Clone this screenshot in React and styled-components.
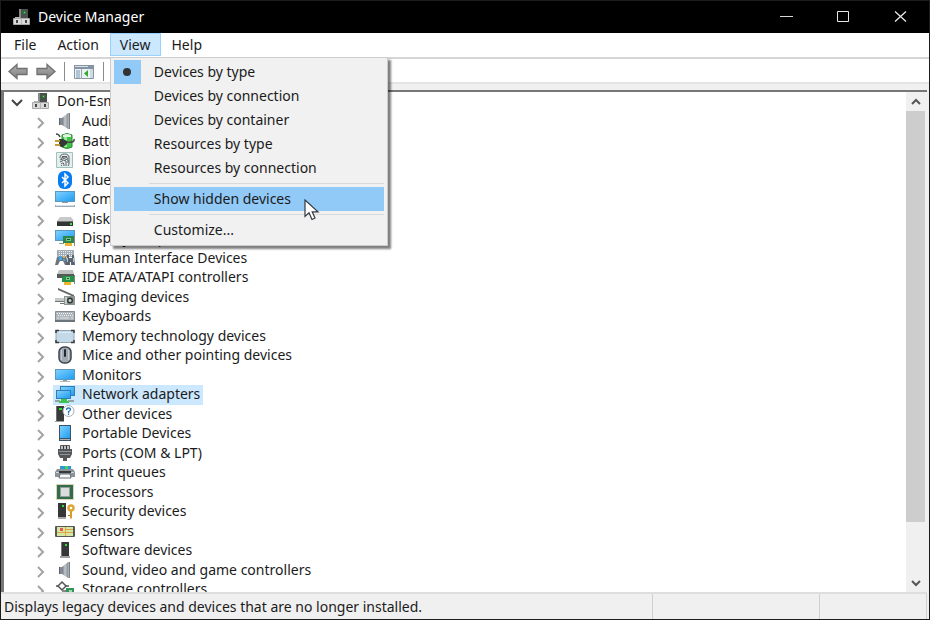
import React from "react";
import styled, { createGlobalStyle, css } from "styled-components";

const colors = {
  frame: "#1c1c1c",
  panel: "#f0f0f0",
  menu: "#f1f1f1",
  line: "#d6d6d6",
  highlight: "#91c9f7",
  hover: "#cce8ff",
  text: "#1b1b1b",
};

const GlobalStyle = createGlobalStyle`
  * {
    box-sizing: border-box;
  }
  body {
    margin: 0;
    font-family: "Noto Sans", "Open Sans", sans-serif;
    font-size: 14px;
    line-height: 18px;
    color: ${colors.text};
  }
  button {
    border: 0;
    padding: 0;
    background: none;
    font: inherit;
    color: inherit;
  }
  ul {
    list-style: none;
    margin: 0;
    padding: 0;
  }
  svg {
    display: block;
    flex: none;
  }
`;

const Window = styled.div`
  display: flex;
  flex-direction: column;
  height: 100vh;
  border: 1px solid ${colors.frame};
  background-color: ${colors.panel};
  overflow: hidden;
`;

const TitleBar = styled.header`
  display: flex;
  align-items: center;
  height: 32px;
  padding-left: 11px;
  background-color: #000;
  color: #fff;

  h1 {
    flex: 1;
    margin: 0 0 0 6px;
    font-size: 14px;
    font-weight: 400;
  }
`;

const WindowButton = styled.button`
  display: flex;
  align-items: center;
  justify-content: center;
  width: 57px;
  height: 32px;
`;

const MenuBar = styled.nav`
  display: flex;
  gap: 1px;
  height: 26px;
  padding-left: 3px;
  background-color: #fff;
  border-bottom: 2px solid ${colors.line};
`;

const MenuItem = styled.div`
  position: relative;
`;

const MenuButton = styled.button`
  height: 23px;
  padding: 0 9px;
  border: 1px solid transparent;
  line-height: 21px;

  ${(props) =>
    props.$open &&
    css`
      background-color: ${colors.hover};
      border-color: #99d1ff;
    `}
`;

const Dropdown = styled.div`
  position: absolute;
  top: 24px;
  left: 0;
  z-index: 2;
  width: 278px;
  padding: 2px 3px 3px;
  background-color: ${colors.menu};
  border: 1px solid #ccc;
  box-shadow: 3px 3px 2px rgba(0, 0, 0, 0.5);

  hr {
    height: 1px;
    margin: 3px 0 3px 35px;
    border: 0;
    background-color: #d9d9d9;
  }
`;

const DropdownItem = styled.button`
  position: relative;
  display: flex;
  align-items: center;
  width: 100%;
  height: 24px;
  text-align: left;
  background-color: ${(props) => (props.$active ? colors.highlight : "transparent")};
`;

const CheckCell = styled.span`
  display: flex;
  align-items: center;
  justify-content: center;
  width: 27px;
  height: 24px;
  margin-right: 13px;
  background-color: ${(props) => (props.$checked ? colors.highlight : "transparent")};

  &::before {
    content: "";
    width: 8px;
    height: 8px;
    border-radius: 50%;
    background-color: ${(props) => (props.$checked ? "#333" : "transparent")};
  }
`;

const Pointer = styled.svg`
  position: absolute;
  left: 190px;
  top: 12px;
  z-index: 3;
`;

const ToolBar = styled.div`
  display: flex;
  align-items: center;
  gap: 8px;
  height: 25px;
  padding: 2px 0 0 7px;
  background-color: #fff;
  border-bottom: 2px solid #e4e4e4;
`;

const Separator = styled.span`
  width: 1px;
  height: 19px;
  background-color: #8c8c8c;
`;

const Content = styled.main`
  flex: 1;
  min-height: 0;
  display: flex;
  margin: 6px 2px 0 0;
  border: solid #777;
  border-width: 2px 0 0 3px;
  background-color: #fff;
`;

const Tree = styled.ul`
  flex: 1;
  overflow: hidden;
`;

const Branch = styled.ul`
  padding-left: 30px;
`;

const Row = styled.div`
  display: flex;
  align-items: center;
  height: ${(props) => props.$height}px;
`;

const Expander = styled.button`
  display: flex;
  align-items: center;
  justify-content: center;
  width: ${(props) => (props.$root ? 25 : 14)}px;
  height: 18px;
  margin-right: ${(props) => (props.$root ? 0 : 5)}px;
  padding-top: 2px;
`;

const Label = styled.span`
  display: flex;
  align-items: center;
  gap: ${(props) => (props.$root ? 6 : 7)}px;
  height: 100%;
  padding: 0 3px 2px 2px;
  white-space: nowrap;
  background-color: ${(props) => (props.$selected ? "#cce8ff" : "transparent")};
`;

const ScrollBar = styled.div`
  display: flex;
  flex-direction: column;
  width: 21px;
  padding-right: 2px;
  background-color: ${colors.panel};
`;

const ScrollButton = styled.button`
  display: flex;
  align-items: center;
  justify-content: center;
  height: 19px;
`;

const ScrollTrack = styled.div`
  flex: 1;

  div {
    height: 89%;
    background-color: #cdcdcd;
  }
`;

const StatusBar = styled.footer`
  display: grid;
  grid-template-columns: 1fr 167px 107px;
  height: 27px;
  margin-right: 2px;
  border-top: 2px solid #dedede;
  line-height: 26px;

  span {
    padding-left: 3px;
    border-right: 1px solid #d0d0d0;
  }
`;

const Gradients = () => (
  <defs>
    <linearGradient id="screen" x1="0" y1="0" x2="1" y2="1">
      <stop offset="0" stopColor="#7fd0ff" />
      <stop offset="1" stopColor="#1f9df2" />
    </linearGradient>
    <linearGradient id="cone" x1="0" y1="0" x2="1" y2="0">
      <stop offset="0" stopColor="#70787f" />
      <stop offset="0.5" stopColor="#c3c8cc" />
      <stop offset="1" stopColor="#8a9198" />
    </linearGradient>
    <linearGradient id="arrow" x1="0" y1="0" x2="0" y2="1">
      <stop offset="0" stopColor="#b0b0b0" />
      <stop offset="1" stopColor="#808080" />
    </linearGradient>
  </defs>
);

const Screen = (
  <>
    <path d="M0 1h20v11H0z" fill="#5c97bd" />
    <path d="M1 2h18v9H1z" fill="url(#screen)" />
  </>
);

const shapes = {
  computer: (
    <>
      <path d="M7 1h9v10H7z" fill="#4b4f4d" />
      <path d="M7 1h2v10H7z" fill="#858987" />
      <path d="M11 3h3v3h-3z" fill="#287d35" />
      <path d="M12 4h1v1h-1z" fill="#5bf05b" />
      <path d="M3 9h5v2H3z" fill="#b5b5b5" />
      <path d="M1.500 10.500h16v6h-16z" fill="#dadada" stroke="#a8a8a8" />
      <path d="M4 12h2v3H4zM13 12h2v3h-2z" fill="#444" />
      <path d="M9 11h1v5H9z" fill="#b5b5b5" />
    </>
  ),
  speaker: (
    <>
      <path d="M4 6h4v7H4z" fill="#848c93" />
      <path d="M4 6h1v7H4z" fill="#5d656c" />
      <path d="M7 6l6-5v16l-6-4z" fill="url(#cone)" />
      <path d="M13 1h2v16h-2z" fill="#a9afb4" />
      <path d="M14 1h1v16h-1z" fill="#777f86" />
    </>
  ),
  battery: (
    <>
      <path d="M7 3q5-3 10 0v12q-5 3-10 0z" fill="#3fc246" stroke="#2c8a33" />
      <path d="M8 3q4-2 8 0v2H8z" fill="#dff3df" />
      <path d="M9 5h3v10H9z" fill="#9aea9b" />
      <path d="M1 2q3 0 4 3M12 10q8 1 7-3" fill="none" stroke="#484848" strokeWidth="1.500" />
      <path d="M4 7h4l4 2v3l-4 3H7q-3 0-3-3z" fill="#333a35" />
      <path d="M0 8h5v2H0zM0 12h5v2H0z" fill="#c09b37" />
    </>
  ),
  fingerprint: (
    <>
      <path d="M1.500 1.500h16v15h-16z" fill="#e3eeee" stroke="#a4c0be" />
      <path
        d="M5 7q0-4 4.500-4T14 7v5q0 2-1 3M7 5.500h5M6 8q0-2 3.500-2T13 8M5 9q4-3 8 0v3M5 11q4-3 6-1v5M6 13q3-3 3 2M6 15l1-1"
        fill="none"
        stroke="#596260"
      />
    </>
  ),
  bluetooth: (
    <>
      <rect x="3" y="0" width="14" height="18" rx="6" fill="#0a7cf2" />
      <path d="M7 6l6 6-3 3V3l3 3-6 6" fill="none" stroke="#fff" strokeWidth="1.500" />
    </>
  ),
  laptop: (
    <>
      {Screen}
      <path d="M7 12h6v1H7z" fill="#8b9ba8" />
      <path d="M0 15h20v2H0z" fill="#9eabb7" />
      <path d="M1 15h18v1H1z" fill="#d7dee4" />
    </>
  ),
  disk: (
    <>
      <path d="M5 7h11l3 4H2z" fill="#c7c9ca" />
      <path d="M2 11h16v5H2z" fill="#323534" />
      <path d="M2 11h16v1H2z" fill="#747776" />
      <path d="M15 13h2v2h-2z" fill="#35ed3a" />
    </>
  ),
  display: (
    <>
      {Screen}
      <path d="M4 14h5v1H4z" fill="#899aa7" />
      <path d="M8 7h11v7H8z" fill="#2d8549" />
      <path d="M11 9h5v3h-5z" fill="#78c78a" />
      <path d="M12 10h3v1h-3z" fill="#174c27" />
      <path d="M19 6h1v11h-1z" fill="#858c8b" />
      <path d="M10 14h7v3h-7z" fill="#efb42d" />
    </>
  ),
  hid: (
    <>
      <path d="M2 1h17v7H2z" fill="#a3adb5" />
      <path d="M4 2.500h14M4 4.500h14M4 6.500h14" stroke="#eceff1" strokeDasharray="1 1" />
      <path d="M2 8h9l2 8h-3l-2-4H5l-2 4H0z" fill="#6d767d" />
      <path d="M4 7h3v4H4z" fill="#41a4e5" />
      <path d="M8 7h2v2H8z" fill="#f0aa36" />
      <path d="M8 10h2v2H8z" fill="#41a4e5" />
      <path d="M12 6h2v3h3V6h2l1 10h-4v-3h-1v3h-4z" fill="#59646e" />
      <path d="M12 9h1v4h-1zM18 9h1v4h-1z" fill="#b6c0c8" />
    </>
  ),
  ide: (
    <>
      <path d="M4 2h14l1 4H2z" fill="#bfc3c1" />
      <path d="M2 6h17v4H2z" fill="#555a58" />
      <path d="M7 8h12v6H7z" fill="#279047" />
      <path d="M11 9h4v3h-4z" fill="#80cf91" />
      <path d="M12 10h2v1h-2z" fill="#185228" />
      <path d="M19 7h1v9h-1z" fill="#7d8580" />
      <path d="M9 14h7v3H9z" fill="#efb42d" />
    </>
  ),
  camera: (
    <>
      <path d="M3 0l16 7v2L3 2z" fill="#626867" />
      <path d="M0 10h10v4H0z" fill="#c5cac8" />
      <path d="M0 13h9v1H0zM5 15h6v1H5z" fill="#6d7472" />
      <path d="M9 8h11v9H9z" fill="#8d9593" />
      <path d="M10 9h2v7h-2z" fill="#c3c9c7" />
      <circle cx="15" cy="12.500" r="3" fill="#303534" />
      <circle cx="15" cy="12.500" r="1.500" fill="#bdcfce" />
    </>
  ),
  keyboard: (
    <>
      <path d="M.5 4.500h19v10H.5z" fill="#aeb5bb" stroke="#858d94" />
      <path d="M2 6.500h16M3 8.500h15" stroke="#f4f5f6" strokeDasharray="1 1" />
      <path d="M2 11h2M5 11h9M16 11h2" stroke="#e4e6e8" />
      <path d="M0 13h20v2H0z" fill="#6b737b" />
    </>
  ),
  memory: (
    <>
      <path d="M1 3.500h18v12H1z" fill="#c4d9e8" stroke="#91a5b3" />
      <path d="M1 6V3.500h3M16 3.500h3V6M1 13v2.500h3M16 15.500h3V13" fill="none" stroke="#36393b" strokeWidth="1.500" />
      <path d="M3 5h13v1H3z" fill="#dceaf4" />
    </>
  ),
  mouse: (
    <>
      <rect x="4" y="1" width="12" height="16" rx="5" fill="#a0a8b2" stroke="#3e454e" strokeWidth="1.500" />
      <path d="M6 4h1v10H6zM13 4h1v10h-1z" fill="#c6cdd4" />
      <rect x="9" y="3" width="2" height="8" rx="1" fill="#23272d" />
    </>
  ),
  monitor: (
    <>
      <g transform="translate(0 2)">{Screen}</g>
      <path d="M8 14h4v1H8z" fill="#8b9ba8" />
      <path d="M5 15h10v1H5z" fill="#adb7be" />
    </>
  ),
  network: (
    <>
      <path d="M5 1h15v10H5z" fill="#357fb0" />
      <path d="M6 2h13v8H6z" fill="url(#screen)" />
      <path d="M1 5h15v9H1z" fill="#357fb0" />
      <path d="M2 6h13v7H2z" fill="url(#screen)" />
      <path d="M6 14h6v2H6zM4 16h10v2H4z" fill="#3bc44d" />
      <path d="M0 15h5v2H0zM13 15h6v2h-6z" fill="#8fa6a0" />
    </>
  ),
  other: (
    <>
      <path d="M1 1h8v15H1z" fill="#383b3a" />
      <path d="M1 1h1v15H1z" fill="#6d706f" />
      <path d="M4 3h3v2H4z" fill="#2be02b" />
      <path d="M0 16h9v1H0z" fill="#9da09f" />
      <circle cx="13.500" cy="6" r="5.500" fill="#fff" stroke="#a6b0b8" />
      <path d="M11.500 5q0-2 2-2t2 1.500q0 1-2 2V8M13.500 8.500V10" fill="none" stroke="#2376bb" strokeWidth="1.300" />
    </>
  ),
  portable: (
    <>
      <path d="M4 1h12v16H4z" fill="#3c5364" />
      <path d="M5 2h10v12H5z" fill="url(#screen)" />
      <path d="M5 15h10v1H5z" fill="#a9b1b6" />
    </>
  ),
  port: (
    <>
      <path d="M5.500 1.500h9v4h-9z" fill="#bfc1c2" stroke="#55585a" />
      <path d="M8 2h1v3H8zM11 2h1v3h-1z" fill="#333" />
      <path d="M3 5h14v5l-2 4h-3v3H8v-3H5l-2-4z" fill="#55585a" />
      <path d="M4 7h12v1H4zM5 10h10v1H5z" fill="#939698" />
    </>
  ),
  printer: (
    <>
      <path d="M5 3h11v4H5z" fill="#2b98db" />
      <path d="M10 3h3v3h-3z" fill="#44d45a" />
      <path d="M2 6h16l2 3v5H0V9z" fill="#8d9499" />
      <path d="M1 9h18v1H1z" fill="#d4d8da" />
      <path d="M4 8h12v2H4z" fill="#343a3e" />
      <path d="M5 11h10l1 4H4z" fill="#f7f9fa" stroke="#687177" />
    </>
  ),
  processor: (
    <>
      <path d="M1.500 1.500h17v15h-17z" fill="none" stroke="#b9a95f" strokeDasharray="1 1" />
      <path d="M2 2h16v14H2z" fill="#326b50" />
      <path d="M5.500 4.500h9v9h-9z" fill="#dcdcdc" stroke="#949e98" />
    </>
  ),
  security: (
    <>
      <path d="M3 1h8v14H3z" fill="#353836" />
      <path d="M7 3h2v2H7z" fill="#32dd39" />
      <path d="M3 15h8v2H3z" fill="#a7aaa8" />
      <circle cx="16" cy="6" r="2.500" fill="none" stroke="#dba83a" strokeWidth="2.500" />
      <path d="M15 9h2v7l-1 1-1-1z" fill="#d99d2c" />
      <path d="M13 13h2v1h-2z" fill="#b48129" />
    </>
  ),
  sensor: (
    <>
      <rect y="4" width="20" height="11" rx="1" fill="#56595a" />
      <path d="M2 5h16v9H2z" fill="#d6e6a5" />
      <path d="M2 10.500h16M10.500 5v9M10 7.500h8" fill="none" stroke="#e0a640" />
      <path d="M5 6h3v3H5z" fill="#e45851" />
    </>
  ),
  software: (
    <>
      <path d="M6 1h8v14H6z" fill="#353836" />
      <path d="M6 1h1v14H6z" fill="#777a78" />
      <path d="M10 3h2v2h-2z" fill="#32dd39" />
      <path d="M5 15h10v2H5z" fill="#9da09f" />
    </>
  ),
  storage: (
    <>
      <path d="M7 2l4 4-4 4-4-4z" fill="#fff" stroke="#555" strokeWidth="1.500" />
      <path d="M1 6h2M10 6h4" stroke="#555" strokeWidth="1.500" />
      <path d="M7 10h4v4H7z" fill="#858b88" />
      <path d="M11 8h8v6h-8z" fill="#329458" />
      <path d="M14 10h3v2h-3z" fill="#a5d5b4" />
    </>
  ),
};

const Icon = ({ name }) => (
  <svg width="20" height="18" viewBox="0 0 20 18" aria-hidden="true">
    {shapes[name]}
  </svg>
);

const Arrow = ({ flip }) => (
  <svg width="20" height="17" viewBox="0 0 20 17">
    <path
      d="M1 8.500L9 1.500V5.500H19V11.500H9V15.500Z"
      fill="url(#arrow)"
      stroke="#707070"
      strokeWidth="1.300"
      transform={flip ? "translate(20 0) scale(-1 1)" : undefined}
    />
  </svg>
);

const devices = [
  ["speaker", "Audio inputs and outputs"],
  ["battery", "Batteries"],
  ["fingerprint", "Biometric devices"],
  ["bluetooth", "Bluetooth"],
  ["laptop", "Computer"],
  ["disk", "Disk drives"],
  ["display", "Display adapters"],
  ["hid", "Human Interface Devices"],
  ["ide", "IDE ATA/ATAPI controllers"],
  ["camera", "Imaging devices"],
  ["keyboard", "Keyboards"],
  ["memory", "Memory technology devices"],
  ["mouse", "Mice and other pointing devices"],
  ["monitor", "Monitors"],
  ["network", "Network adapters"],
  ["other", "Other devices"],
  ["portable", "Portable Devices"],
  ["port", "Ports (COM & LPT)"],
  ["printer", "Print queues"],
  ["processor", "Processors"],
  ["security", "Security devices"],
  ["sensor", "Sensors"],
  ["software", "Software devices"],
  ["speaker", "Sound, video and game controllers"],
  ["storage", "Storage controllers"],
];

const viewModes = [
  "Devices by type",
  "Devices by connection",
  "Devices by container",
  "Resources by type",
  "Resources by connection",
];

const ViewMenu = () => (
  <Dropdown role="menu">
    {viewModes.map((mode, i) => (
      <DropdownItem key={mode} role="menuitemradio" aria-checked={i === 0}>
        <CheckCell $checked={i === 0} />
        {mode}
      </DropdownItem>
    ))}
    <hr />
    <DropdownItem role="menuitem" $active>
      <CheckCell />
      Show hidden devices
      <Pointer width="16" height="22" viewBox="0 0 16 22">
        <path
          d="M1 1V17.500L5 13.800L8 20.500L11 19L8.200 12.800H14Z"
          fill="#fff"
          stroke="#34383f"
          strokeWidth="1.200"
        />
      </Pointer>
    </DropdownItem>
    <hr />
    <DropdownItem role="menuitem">
      <CheckCell />
      Customize...
    </DropdownItem>
  </Dropdown>
);

export default function App() {
  return (
    <>
      <GlobalStyle />
      <Window>
        <TitleBar>
          <svg width="20" height="18" viewBox="0 0 20 18" aria-hidden="true">
            <Gradients />
            {shapes.computer}
          </svg>
          <h1>Device Manager</h1>
          <WindowButton aria-label="Minimize">
            <svg width="14" height="12" stroke="#d8d8d8">
              <path d="M0 5.500h13" />
            </svg>
          </WindowButton>
          <WindowButton aria-label="Maximize">
            <svg width="14" height="12" fill="none" stroke="#e8e8e8">
              <path d="M.5 .5h11v10H.5z" />
            </svg>
          </WindowButton>
          <WindowButton aria-label="Close">
            <svg width="14" height="12" stroke="#e8e8e8" strokeWidth="1.300">
              <path d="M1 .5l11 10M12 .5L1 10.500" />
            </svg>
          </WindowButton>
        </TitleBar>

        <MenuBar>
          <MenuButton>File</MenuButton>
          <MenuButton>Action</MenuButton>
          <MenuItem>
            <MenuButton $open aria-expanded="true">
              View
            </MenuButton>
            <ViewMenu />
          </MenuItem>
          <MenuButton>Help</MenuButton>
        </MenuBar>

        <ToolBar>
          <button aria-label="Back">
            <Arrow />
          </button>
          <button aria-label="Forward">
            <Arrow flip />
          </button>
          <Separator />
          <button aria-label="Show console tree">
            <svg width="22" height="16" viewBox="0 0 22 16">
              <path d="M1.500 1.500h19v13h-19z" fill="#edf1f4" stroke="#8896a3" />
              <path d="M1 1h20v4H1z" fill="#8494a3" />
              <path d="M2 2h13v1H2z" fill="#d9e2e9" />
              <path d="M3 7h4M3 9h4M3 11h4M3 13h4" stroke="#7297b5" />
              <path d="M8 5h1v10H8z" fill="#9aa7b2" />
              <path d="M15 6v7l-4-3.500z" fill="#2cae2c" />
              <path d="M17 5h3v9h-3z" fill="#d0dae2" />
            </svg>
          </button>
          <Separator />
        </ToolBar>

        <Content>
          <Tree role="tree">
            <li>
              <Row $height={20}>
                <Expander $root aria-label="Collapse">
                  <svg width="12" height="8" fill="none" stroke="#444" strokeWidth="2">
                    <path d="M1 1l5 5 5-5" />
                  </svg>
                </Expander>
                <Label $root>
                  <Icon name="computer" />
                  Don-Esmond
                </Label>
              </Row>
              <Branch role="group">
                {devices.map(([icon, name], i) => (
                  <li key={name}>
                    <Row $height={i % 2 ? 19 : 20}>
                      <Expander aria-label={`Expand ${name}`}>
                        <svg width="8" height="12" fill="none" stroke="#a3a3a3" strokeWidth="2">
                          <path d="M1 1l5 5-5 5" />
                        </svg>
                      </Expander>
                      <Label $selected={name === "Network adapters"}>
                        <Icon name={icon} />
                        {name}
                      </Label>
                    </Row>
                  </li>
                ))}
              </Branch>
            </li>
          </Tree>
          <ScrollBar>
            <ScrollButton aria-label="Scroll up">
              <svg width="10" height="8" fill="none" stroke="#555" strokeWidth="2">
                <path d="M1 6l4-4 4 4" />
              </svg>
            </ScrollButton>
            <ScrollTrack>
              <div />
            </ScrollTrack>
            <ScrollButton aria-label="Scroll down">
              <svg width="10" height="8" fill="none" stroke="#555" strokeWidth="2">
                <path d="M1 2l4 4 4-4" />
              </svg>
            </ScrollButton>
          </ScrollBar>
        </Content>

        <StatusBar>
          <span>Displays legacy devices and devices that are no longer installed.</span>
          <span />
          <span />
        </StatusBar>
      </Window>
    </>
  );
}
